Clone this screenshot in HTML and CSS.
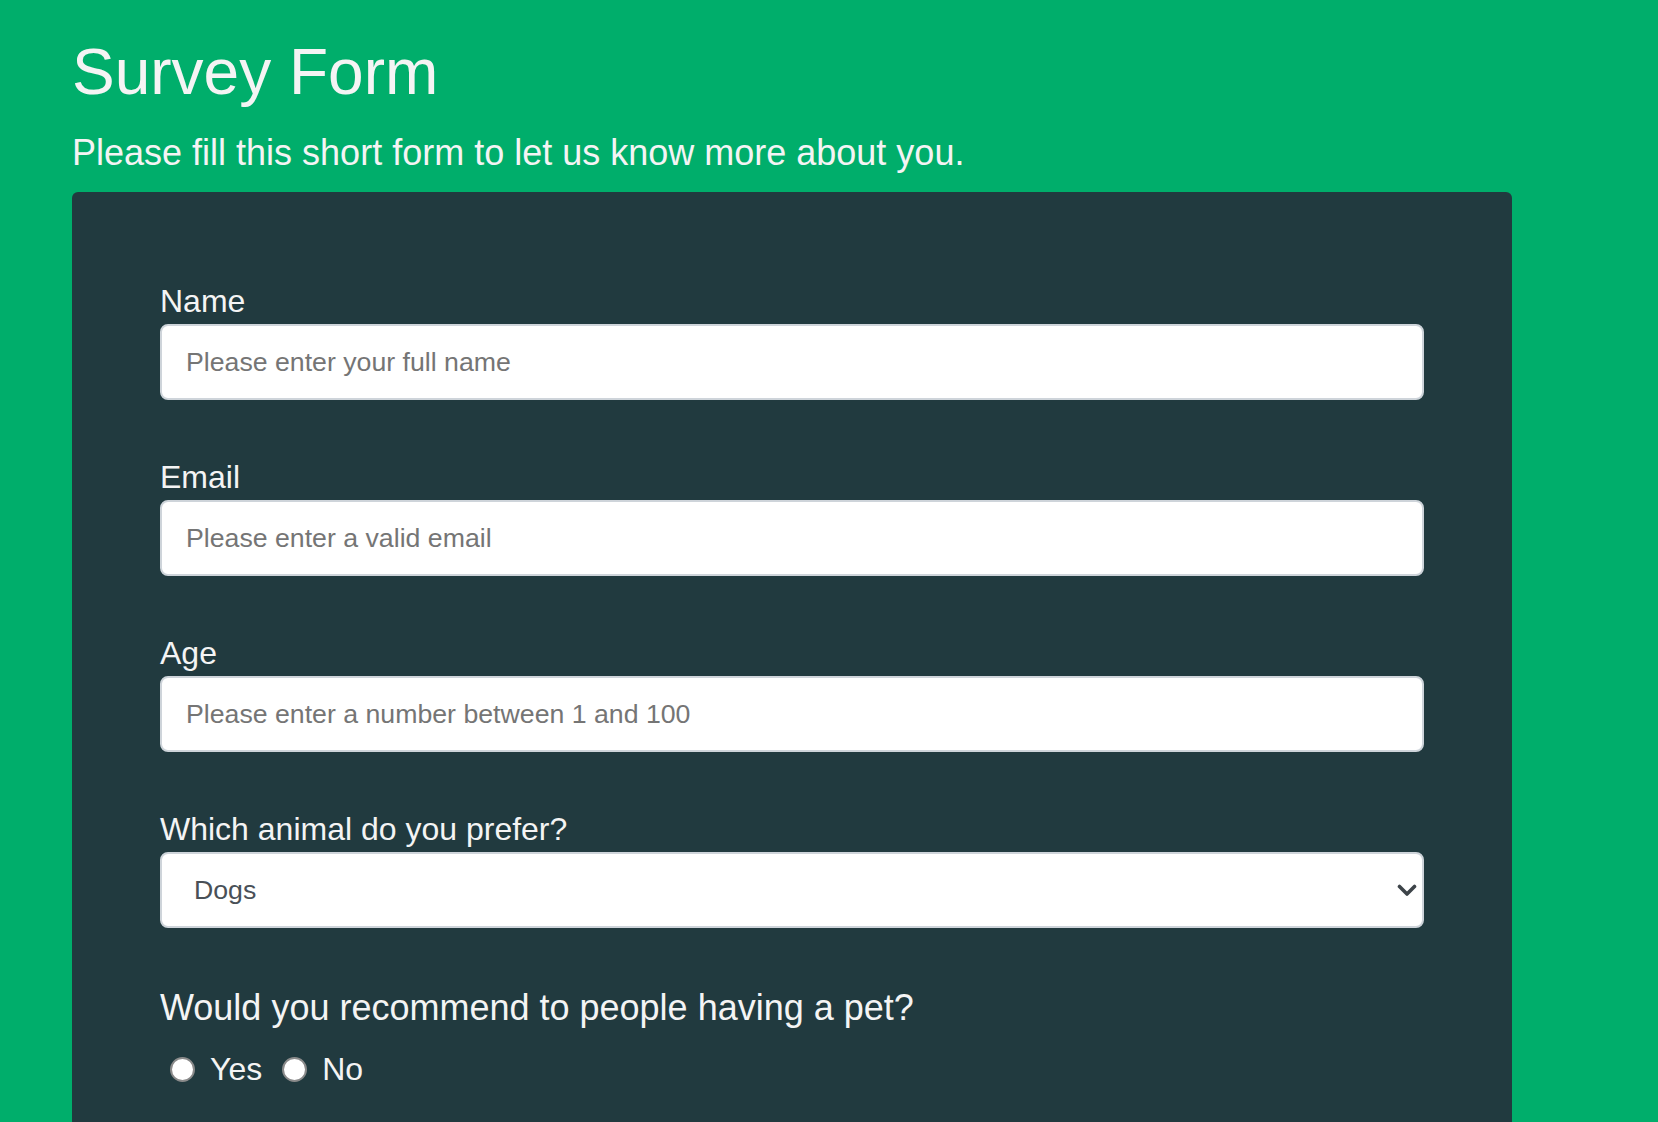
FILE: index.html
```html
<!DOCTYPE html>
<html lang="en">
<head>
<meta charset="utf-8">
<title>Survey Form</title>
<link rel="stylesheet" href="styles.css">
</head>
<body>
  <h1 class="title">Survey Form</h1>
  <p class="subtitle">Please fill this short form to let us know more about you.</p>
  <form class="card">
    <div class="group">
      <label class="label" for="name">Name</label>
      <input class="control" id="name" type="text" placeholder="Please enter your full name">
    </div>
    <div class="group">
      <label class="label" for="email">Email</label>
      <input class="control" id="email" type="email" placeholder="Please enter a valid email">
    </div>
    <div class="group">
      <label class="label" for="age">Age</label>
      <input class="control" id="age" type="number" placeholder="Please enter a number between 1 and 100">
    </div>
    <div class="group">
      <label class="label" for="animal">Which animal do you prefer?</label>
      <div class="select-wrap">
        <select class="control select" id="animal">
          <option>Dogs</option>
          <option>Cats</option>
          <option>Birds</option>
        </select>
        <svg class="chevron" width="20" height="13" viewBox="0 0 20 13"><polyline points="2.5,2.5 10,10 17.5,2.5" fill="none" stroke="#3d4449" stroke-width="3.6" stroke-linecap="round" stroke-linejoin="round"/></svg>
      </div>
    </div>
    <p class="question">Would you recommend to people having a pet?</p>
    <div class="radio-row">
      <input class="radio" type="radio" id="yes" name="recommend">
      <label class="opt" for="yes">Yes</label>
      <input class="radio" type="radio" id="no" name="recommend">
      <label class="opt" for="no">No</label>
    </div>
  </form>
</body>
</html>
```
FILE: styles.css
```css
html {
  overflow: hidden;
}

body {
  margin: 0;
  padding: 0 0 0 72px;
  background: #00ae6b;
  color: #f4f4f4;
  font-family: "Liberation Sans", Arial, Helvetica, sans-serif;
}

.title {
  margin: 35px 0 0;
  font-size: 64px;
  font-weight: normal;
  line-height: 74px;
}

.subtitle {
  margin: 23px 0 0;
  font-size: 36px;
  line-height: 41px;
}

.card {
  box-sizing: border-box;
  width: 1440px;
  margin-top: 19px;
  padding: 91px 88px 120px;
  background: #213a3f;
  border-radius: 6px;
}

.group {
  margin-bottom: 59px;
}

.label {
  display: block;
  font-size: 32px;
  line-height: 37px;
  margin-bottom: 4px;
}

.control {
  display: block;
  box-sizing: border-box;
  width: 100%;
  height: 76px;
  margin: 0;
  padding: 0 24px;
  border: 2px solid #ced4da;
  border-radius: 8px;
  background: #ffffff;
  font-family: "Liberation Sans", Arial, Helvetica, sans-serif;
  font-size: 26.7px;
  color: #495057;
  outline: none;
}

.control::placeholder {
  color: #757575;
  opacity: 1;
}

.select-wrap {
  position: relative;
}

.select {
  -webkit-appearance: none;
  appearance: none;
  padding-left: 32px;
}

.chevron {
  position: absolute;
  right: 7px;
  top: 32px;
  pointer-events: none;
}

.question {
  margin: 9px 0 0;
  font-size: 36px;
  line-height: 41px;
}

.radio-row {
  display: flex;
  align-items: center;
  margin-top: 23px;
  font-size: 32px;
  line-height: 37px;
}

.radio {
  -webkit-appearance: none;
  appearance: none;
  box-sizing: border-box;
  width: 25px;
  height: 25px;
  margin: 0 15px 0 10px;
  border: 2px solid #8a8a8a;
  border-radius: 50%;
  background: #ffffff;
}

.opt {
  margin-right: 10px;
}
```
